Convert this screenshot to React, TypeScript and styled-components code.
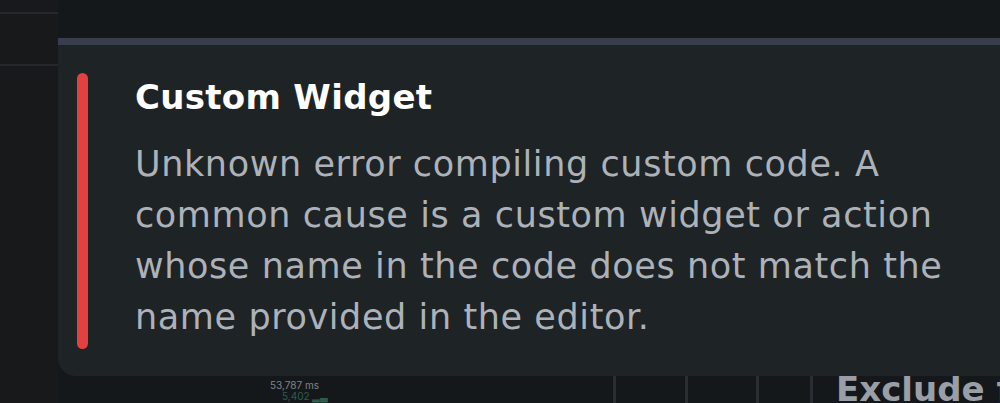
import React from 'react'
import styled, { createGlobalStyle } from 'styled-components'

const GlobalStyle = createGlobalStyle`
  html, body {
    margin: 0;
    padding: 0;
    background: #15181b;
  }
  body {
    font-family: "DejaVu Sans", "Liberation Sans", sans-serif;
    -webkit-font-smoothing: antialiased;
  }
`

const App = () => {
  return (
    <>
      <GlobalStyle />
      <Screen>
        <SidePanel>
          <SideRow $height={14} />
          <SideRow $height={52} />
          <SideRow $height={337} />
        </SidePanel>
        <Main>
          <Spacer />
          <TableRow>
            <ChartCell>
              <MiniLabel>53,787 ms</MiniLabel>
              <MiniLabel $green>5,402 ▂▃</MiniLabel>
            </ChartCell>
            <BlankCell $width={72} />
            <BlankCell $width={71} />
            <BlankCell $width={54} />
            <LabelCell>
              <LabelText>Exclude from</LabelText>
            </LabelCell>
          </TableRow>
        </Main>

        <Toast>
          <AccentBar />
          <ToastBody>
            <ToastTitle>Custom Widget</ToastTitle>
            <ToastText>
              Unknown error compiling custom code. A common cause is a custom widget or action
              whose name in the code does not match the name provided in the editor.
            </ToastText>
          </ToastBody>
        </Toast>
      </Screen>
    </>
  )
}

const Screen = styled.div`
  position: relative;
  width: 1000px;
  height: 403px;
  overflow: hidden;
  display: flex;
  background: #15181b;
`

const SidePanel = styled.div`
  width: 58px;
  flex-shrink: 0;
  display: flex;
  flex-direction: column;
  background: #17191b;
`

const SideRow = styled.div<{ $height: number }>`
  height: ${(p) => p.$height}px;
  border-bottom: 2px solid #25272a;
  box-sizing: border-box;
  &:last-child {
    border-bottom: none;
  }
`

const Main = styled.div`
  flex: 1;
  display: flex;
  flex-direction: column;
`

const Spacer = styled.div`
  flex: 1;
`

const TableRow = styled.div`
  height: 34px;
  display: flex;
  align-items: stretch;
  padding-left: 212px;
  background: #15181b;
`

const ChartCell = styled.div`
  width: 343px;
  display: flex;
  flex-direction: column;
  justify-content: flex-end;
  padding: 0 0 1px 0;
  box-sizing: border-box;
  font-family: Inter, sans-serif;
  font-size: 10px;
  line-height: 11px;
`

const MiniLabel = styled.span<{ $green?: boolean }>`
  color: ${(p) => (p.$green ? '#2c5e48' : '#7f848a')};
  padding-left: ${(p) => (p.$green ? '12px' : '0')};
`

const BlankCell = styled.div<{ $width: number }>`
  width: ${(p) => p.$width}px;
  border-left: 3px solid #2a2e34;
  box-sizing: border-box;
`

const LabelCell = styled.div`
  border-left: 3px solid #2a2e34;
  padding-left: 23px;
  display: flex;
  align-items: flex-end;
  overflow: hidden;
`

const LabelText = styled.span`
  font-size: 34px;
  font-weight: 700;
  color: #9a9fa6;
  line-height: 1;
  margin-bottom: -3px;
  white-space: nowrap;
`

const Toast = styled.div`
  position: absolute;
  left: 58px;
  top: 38px;
  width: 980px;
  height: 338px;
  box-sizing: border-box;
  background: #1e2326;
  border-top: 7px solid #3a3d4d;
  border-bottom-left-radius: 18px;
  display: flex;
  padding: 28px 40px 0 19px;
  gap: 47px;
`

const AccentBar = styled.div`
  width: 11px;
  height: 276px;
  flex-shrink: 0;
  border-radius: 6px;
  background: #e2413f;
`

const ToastBody = styled.div`
  display: flex;
  flex-direction: column;
  width: 830px;
`

const ToastTitle = styled.div`
  margin-top: 4px;
  font-size: 34px;
  font-weight: 700;
  color: #ffffff;
  line-height: 40px;
  letter-spacing: 0.3px;
`

const ToastText = styled.p`
  margin: 22px 0 0;
  font-size: 35px;
  font-weight: 400;
  line-height: 51px;
  color: #adb2b9;
  letter-spacing: 0.6px;
`

export default App
